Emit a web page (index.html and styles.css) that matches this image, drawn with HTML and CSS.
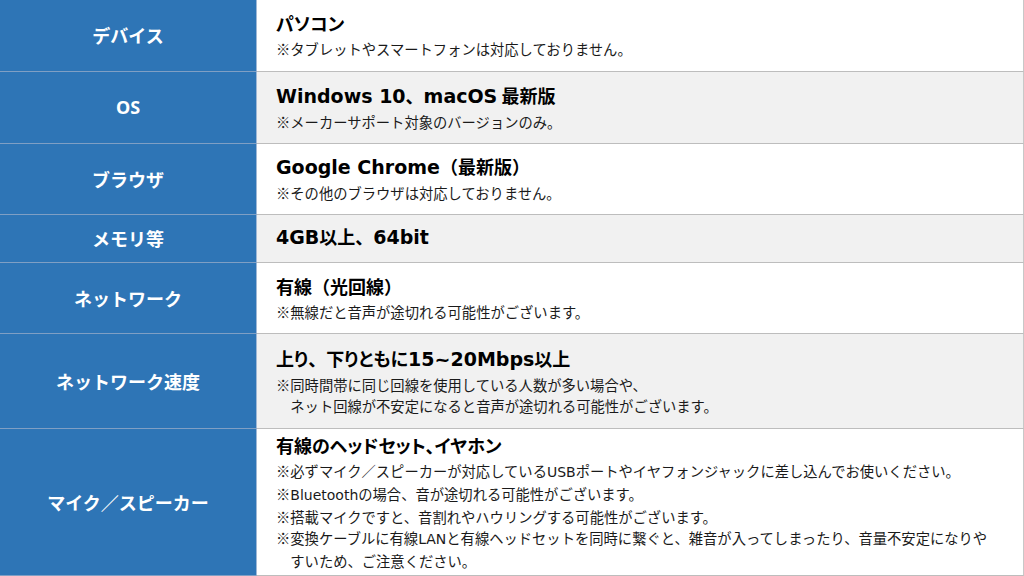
FILE: index.html
```html
<!DOCTYPE html>
<html lang="ja">
<head>
<meta charset="utf-8">
<link rel="stylesheet" href="styles.css">
</head>
<body>
<div class="table">
  <div class="row h72">
    <div class="label">デバイス</div>
    <div class="cell">
      <div class="title prop">パソコン</div>
      <div class="note">※タブレットやスマートフォンは対応しておりません。</div>
    </div>
  </div>
  <div class="row h72 alt">
    <div class="label">OS</div>
    <div class="cell">
      <div class="title"><span class="lat">Windows 10</span>、<span class="lat">macOS</span> 最新版</div>
      <div class="note">※メーカーサポート対象のバージョンのみ。</div>
    </div>
  </div>
  <div class="row h71">
    <div class="label">ブラウザ</div>
    <div class="cell">
      <div class="title"><span class="lat">Google Chrome</span>（最新版）</div>
      <div class="note">※その他のブラウザは対応しておりません。</div>
    </div>
  </div>
  <div class="row h48 alt">
    <div class="label">メモリ等</div>
    <div class="cell">
      <div class="title"><span class="lat">4GB</span>以上、<span class="lat">64bit</span></div>
    </div>
  </div>
  <div class="row h71">
    <div class="label">ネットワーク</div>
    <div class="cell">
      <div class="title">有線（光回線）</div>
      <div class="note">※無線だと音声が途切れる可能性がございます。</div>
    </div>
  </div>
  <div class="row h95 alt">
    <div class="label">ネットワーク速度</div>
    <div class="cell">
      <div class="title prop">上り<span class="full">、</span>下りともに<span class="lat">15~20Mbps</span>以上</div>
      <div class="note">※同時間帯に同じ回線を使用している人数が多い場合や、<br>ネット回線が不安定になると音声が途切れる可能性がございます。</div>
    </div>
  </div>
  <div class="row h147">
    <div class="label">マイク／スピーカー</div>
    <div class="cell">
      <div class="title prop">有線のヘッドセット、イヤホン</div>
      <div class="note">※必ずマイク／スピーカーが対応している<span class="lat">USB</span>ポートやイヤフォンジャックに差し込んでお使いください。</div>
      <div class="note">※<span class="lat">Bluetooth</span>の場合、音が途切れる可能性がございます。</div>
      <div class="note">※搭載マイクですと、音割れやハウリングする可能性がございます。</div>
      <div class="note">※変換ケーブルに有線<span class="lat">LAN</span>と有線ヘッドセットを同時に繋ぐと、雑音が入ってしまったり、音量不安定になりや<br>すいため、ご注意ください。</div>
    </div>
  </div>
</div>
</body>
</html>
```

FILE: styles.css
```css
html, body {
  margin: 0;
  padding: 0;
  background: #ffffff;
}

body {
  width: 1024px;
  height: 576px;
  overflow: hidden;
  font-family: "Noto Sans CJK JP", "Noto Sans", sans-serif;
}

.table {
  display: flex;
  flex-direction: column;
  width: 1024px;
}

.row {
  display: flex;
  box-sizing: border-box;
}

.h72 { height: 72px; }
.h71 { height: 71px; }
.h48 { height: 48px; }
.h95 { height: 95px; }
.h147 { height: 147px; }

.label {
  width: 257px;
  flex: none;
  box-sizing: border-box;
  background: #2e75b6;
  border-bottom: 1px solid #7f9fc4;
  border-right: 1px solid #9fb8d6;
  color: #ffffff;
  font-family: "Noto Sans", "Noto Sans CJK JP", sans-serif;
  font-weight: 700;
  font-size: 18px;
  display: flex;
  align-items: center;
  justify-content: center;
  padding-bottom: 1px;
}

.cell {
  flex: 1;
  box-sizing: border-box;
  background: #ffffff;
  border-bottom: 1px solid #bdbdbd;
  border-right: 1px solid #c8c8c8;
  padding: 0 0 1px 19px;
  display: flex;
  flex-direction: column;
  justify-content: center;
  color: #111111;
}

.alt .cell {
  background: #f1f1f1;
}

.title {
  font-weight: 700;
  font-size: 18px;
  line-height: 30px;
  color: #000000;
  margin-top: -3px;
}

.title.prop {
  font-feature-settings: "palt" 1;
}

.title .full {
  font-feature-settings: normal;
}

.title .lat {
  font-family: "DejaVu Sans", sans-serif;
  font-size: 19px;
}

.note {
  font-size: 14.3px;
  line-height: 21px;
  padding-left: 1em;
  text-indent: -1em;
  color: #1a1a1a;
}

.note .lat {
  font-family: "DejaVu Sans", sans-serif;
  font-size: 14px;
}
```
